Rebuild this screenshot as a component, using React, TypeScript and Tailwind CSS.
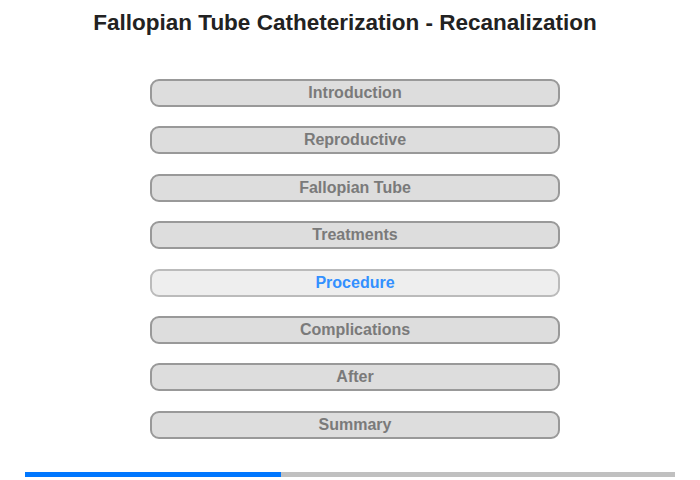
const items = [
  'Introduction',
  'Reproductive',
  'Fallopian Tube',
  'Treatments',
  'Procedure',
  'Complications',
  'After',
  'Summary',
]

const active = 'Procedure'

export default function App() {
  return (
    <div className="w-[700px] h-[480px] bg-white flex flex-col font-['Liberation_Sans',Arial,sans-serif]">
      <h1 className="pt-[10px] pr-[10px] text-center text-[22.5px] leading-[26px] font-bold text-[#222]">
        Fallopian Tube Catheterization - Recanalization
      </h1>

      <div className="mt-[43px] pl-[10px] flex flex-col items-center gap-[19.4px]">
        {items.map((label) => {
          const isActive = label === active
          return (
            <div
              key={label}
              className={[
                'w-[410px] h-[28px] rounded-[9px] border-2 flex items-center justify-center text-[16px] font-bold',
                isActive
                  ? 'bg-[#eeeeee] border-[#bbbbbb] text-[#3390ff]'
                  : 'bg-[#dddddd] border-[#999999] text-[#7a7a7a]',
              ].join(' ')}
            >
              {label}
            </div>
          )
        })}
      </div>

      <div className="mt-auto mb-[3px] mx-[25px] h-[5px] flex bg-[#c0c0c0]">
        <div className="w-[256px] bg-[#0077ff]" />
      </div>
    </div>
  )
}
